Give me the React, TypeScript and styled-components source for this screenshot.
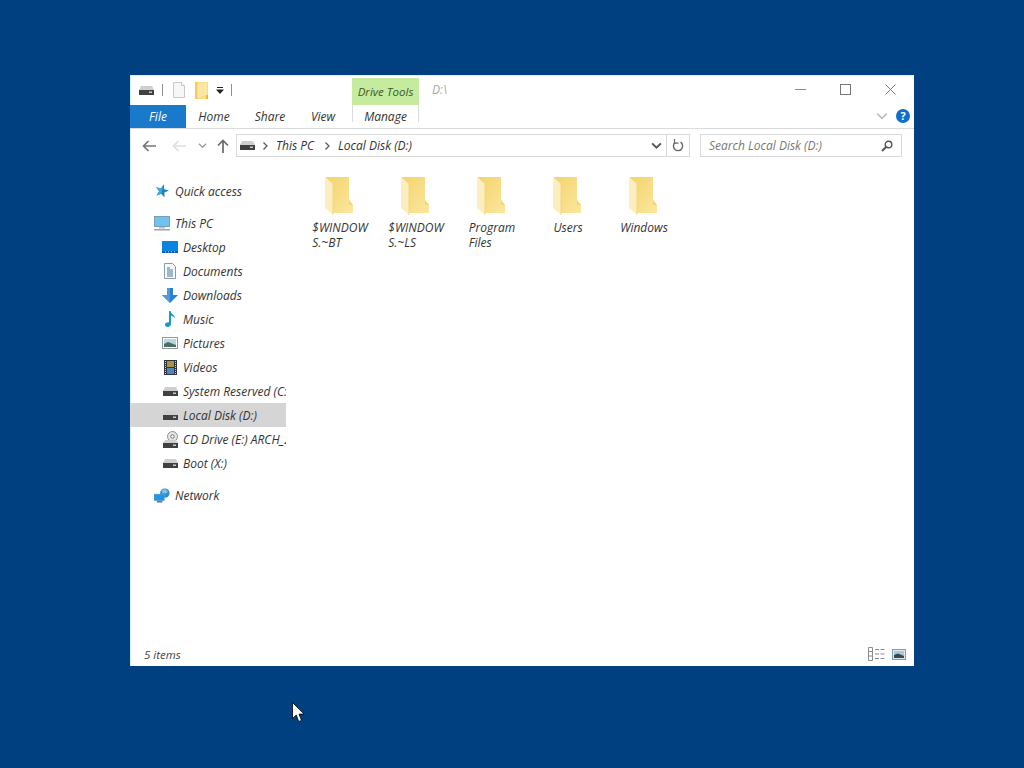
import React from 'react'
import styled, { createGlobalStyle } from 'styled-components'

const GlobalStyle = createGlobalStyle`
  html, body { margin: 0; padding: 0; }
  body {
    font-family: "Open Sans", "Noto Sans", sans-serif;
    font-style: italic;
    font-size: 12px;
    color: #1f1f1f;
  }
`

const DriveIcon = () => (
  <svg width="15" height="9" viewBox="0 0 15 9">
    <path d="M2 0h11l2 4H0z" fill="#cfcfcf" />
    <rect x="0" y="4" width="15" height="5" fill="#3f4245" />
    <rect x="10" y="5.500" width="3" height="1.500" fill="#c8c8c8" />
  </svg>
)

const FileIcon = () => (
  <svg width="12" height="16" viewBox="0 0 12 16">
    <path d="M.5.5h8l3 3v12H.5z" fill="#f7f7f7" stroke="#c9c9c9" />
    <path d="M8.500.5v3h3" fill="#fff" stroke="#c9c9c9" />
  </svg>
)

const SmallFolder = () => (
  <svg width="13" height="17" viewBox="0 0 13 17">
    <rect width="13" height="17" fill="#fbdc82" />
    <path d="M0 0h2.500v17H0z" fill="#f6c95a" />
    <path d="M2.500 1H12v12l-9.500 3z" fill="#fde6a0" />
    <path d="M11 13h2v4h-2z" fill="#efb53a" />
  </svg>
)

const Folder = () => (
  <svg width="28" height="38" viewBox="0 0 28 38">
    <defs>
      <linearGradient id="folderBody" x1="0" y1="0" x2="1" y2="1">
        <stop offset="0" stopColor="#f4d36c" />
        <stop offset="1" stopColor="#fbe79f" />
      </linearGradient>
    </defs>
    <path d="M1 0h23v23l4 5v8H8z" fill="url(#folderBody)" />
    <path d="M0 0l8 7v31l-8-7z" fill="#fdeec0" />
    <path d="M8 7v31" stroke="#f0d06e" strokeWidth=".8" />
    <path d="M24 23l4 5h-4z" fill="#f4d576" />
  </svg>
)

const StarIcon = () => (
  <svg width="14" height="14" viewBox="0 0 14 14">
    <path d="M8.800.2l.4 5 4.800 1.400-4.650 1.900.16 5-3.230-3.800-4.720 1.700 2.640-4.260L1.130 3.200 6 4.400z" fill="#1b7fc0" />
    <path d="M8.800.2L6.300 9.700l-4.740 1.700 2.640-4.260L1.130 3.200 6 4.400z" fill="#3fa6de" />
  </svg>
)

const MonitorIcon = () => (
  <svg width="16" height="15" viewBox="0 0 16 15">
    <rect x=".5" y=".5" width="15" height="10" fill="#6ec4ee" stroke="#6f8fa3" strokeWidth=".8" />
    <rect x="5" y="11" width="6" height="1.500" fill="#b4c4cf" />
    <rect x="0" y="13" width="16" height="1.500" fill="#9aa7af" />
  </svg>
)

const DesktopIcon = () => (
  <svg width="16" height="12" viewBox="0 0 16 12">
    <rect width="16" height="12" fill="#0a84e0" />
    <rect y="10" width="16" height="2" fill="#0b5fa8" />
    <path d="M3 10.800h1M6 10.800h1M9 10.800h1M12 10.800h1" stroke="#bfe2fa" strokeWidth="1" />
  </svg>
)

const DocumentIcon = () => (
  <svg width="12" height="16" viewBox="0 0 12 16">
    <path d="M.5.5h8l3 3v12H.5z" fill="#f8f8f8" stroke="#8b98a8" />
    <path d="M3 5h3M3 7h6M3 9h6M3 11h6M3 13h6" stroke="#3f79ad" strokeWidth="1" />
  </svg>
)

const DownloadIcon = () => (
  <svg width="16" height="15" viewBox="0 0 16 15">
    <path d="M5 0h6v7h5l-8 8-8-8h5z" fill="#2f80cc" />
    <path d="M5 0h3v15l-8-8h5z" fill="#4c9ce2" />
  </svg>
)

const MusicIcon = () => (
  <svg width="12" height="16" viewBox="0 0 12 16">
    <path d="M5 0h1.500c.5 3 4.500 3.500 4.500 7.500-1-2-3-2.500-4-2.700V13c0 1.800-1.700 3-3.500 3S1 15 1 13.500 2.800 11 5 11.300z" fill="#1c9ac4" />
  </svg>
)

const PictureIcon = () => (
  <svg width="16" height="12" viewBox="0 0 16 12">
    <rect x=".5" y=".5" width="15" height="11" fill="#fff" stroke="#8a97a3" />
    <rect x="2" y="2" width="12" height="8" fill="#b6d6e2" />
    <path d="M2 7l4-2 8 3v2H2z" fill="#4d6b60" />
  </svg>
)

const VideoIcon = () => (
  <svg width="13" height="15" viewBox="0 0 13 15">
    <rect width="13" height="15" fill="#2d3340" />
    <rect x="3" y="1" width="7" height="6" fill="#a8963f" />
    <rect x="3" y="8" width="7" height="6" fill="#4d86b8" />
    <path d="M1.500 1v13M11.500 1v13" stroke="#d6d9de" strokeWidth="1" strokeDasharray="1 1" />
  </svg>
)

const CdDriveIcon = () => (
  <svg width="15" height="17" viewBox="0 0 15 17">
    <circle cx="9.500" cy="5.500" r="5" fill="#e6e6e6" stroke="#8f8f8f" />
    <circle cx="9.500" cy="5.500" r="1.800" fill="#f5f5f5" stroke="#777" />
    <path d="M2 9h11l2 3H0z" fill="#cfcfcf" />
    <rect y="12" width="15" height="5" fill="#3f4245" />
    <rect x="10" y="13.500" width="3" height="1.500" fill="#c8c8c8" />
  </svg>
)

const NetworkIcon = () => (
  <svg width="17" height="15" viewBox="0 0 17 15">
    <circle cx="11.500" cy="5" r="5" fill="#2f8fc8" />
    <path d="M8 2l4-1.500 3 3-2.500 2L9 5z" fill="#7cc5e8" />
    <rect x="0" y="6" width="11" height="7" fill="#1f97e6" stroke="#6fa8cc" strokeWidth=".6" />
    <rect x="3" y="13" width="6" height="2" fill="#5b7f99" />
  </svg>
)

const BackArrow = ({ color }: { color: string }) => (
  <svg width="14" height="12" viewBox="0 0 14 12">
    <path d="M6.500 1L1.500 6l5 5M2 6h12" fill="none" stroke={color} strokeWidth="1.700" />
  </svg>
)

const UpArrow = () => (
  <svg width="12" height="14" viewBox="0 0 12 14">
    <path d="M1 6.500l5-5 5 5M6 2v12" fill="none" stroke="#6a6a6a" strokeWidth="1.700" />
  </svg>
)

const Chevron = ({ size, color, weight }: { size: number; color: string; weight: number }) => (
  <svg width={size} height={size} viewBox="0 0 10 10">
    <path d="M1 3l4 4 4-4" fill="none" stroke={color} strokeWidth={weight} />
  </svg>
)

const Crumb = () => (
  <svg width="6" height="8" viewBox="0 0 6 8">
    <path d="M1.500.5L5 4 1.500 7.500" fill="none" stroke="#555" strokeWidth="1.200" />
  </svg>
)

const Refresh = () => (
  <svg width="12" height="13" viewBox="0 0 12 13">
    <path d="M3.200 3.400a4.600 4.600 0 1 0 5.400-.2" fill="none" stroke="#666" strokeWidth="1.400" />
    <path d="M2.500 0v4.200h4" fill="none" stroke="#666" strokeWidth="1.200" />
  </svg>
)

const SearchGlass = () => (
  <svg width="12" height="12" viewBox="0 0 12 12">
    <circle cx="7.500" cy="4.500" r="3.300" fill="none" stroke="#555" strokeWidth="1.400" />
    <path d="M5 7l-4 4" stroke="#555" strokeWidth="2" />
  </svg>
)

const DetailsView = () => (
  <svg width="17" height="14" viewBox="0 0 17 14">
    <path d="M.5.500h4v13h-4zM.5 4.500h4M.5 9h4" fill="#fff" stroke="#8c8c8c" />
    <path d="M7 2.500h10M7 7h10M7 11.500h10" stroke="#8c8c8c" strokeDasharray="4 1.500" />
  </svg>
)

const LargeView = () => (
  <svg width="14" height="11" viewBox="0 0 14 11">
    <rect x=".5" y=".5" width="13" height="10" fill="#dfe9ee" stroke="#7f9bb0" />
    <rect x="2" y="2" width="10" height="7" fill="#a8c8d6" />
    <path d="M2 6l4-1.500L12 7v2H2z" fill="#3b4a48" />
  </svg>
)

const Cursor = () => (
  <svg width="12" height="21" viewBox="0 0 12 21">
    <path d="M.500.500v16l3.800-3.500 2.400 6.500 2.800-1.100-2.500-6.300h5z" fill="#fff" stroke="#000" strokeWidth=".8" />
  </svg>
)

const navItems = [
  { label: 'Quick access', icon: <StarIcon />, level: 0, gap: 8 },
  { label: 'This PC', icon: <MonitorIcon />, level: 0 },
  { label: 'Desktop', icon: <DesktopIcon />, level: 1 },
  { label: 'Documents', icon: <DocumentIcon />, level: 1 },
  { label: 'Downloads', icon: <DownloadIcon />, level: 1 },
  { label: 'Music', icon: <MusicIcon />, level: 1 },
  { label: 'Pictures', icon: <PictureIcon />, level: 1 },
  { label: 'Videos', icon: <VideoIcon />, level: 1 },
  { label: 'System Reserved (C:)', icon: <DriveIcon />, level: 1 },
  { label: 'Local Disk (D:)', icon: <DriveIcon />, level: 1, selected: true },
  { label: 'CD Drive (E:) ARCH_202', icon: <CdDriveIcon />, level: 1 },
  { label: 'Boot (X:)', icon: <DriveIcon />, level: 1, gap: 8 },
  { label: 'Network', icon: <NetworkIcon />, level: 0 },
]

const folders = [
  ['$WINDOW', 'S.~BT'],
  ['$WINDOW', 'S.~LS'],
  ['Program', 'Files'],
  ['Users'],
  ['Windows'],
]

export default function App() {
  return (
    <Desktop>
      <GlobalStyle />
      <Window>
        <TitleBar>
          <QuickAccess>
            <DriveIcon />
            <QatSeparator />
            <FileIcon />
            <SmallFolder />
            <QatMenu>
              <svg width="8" height="7" viewBox="0 0 8 7">
                <path d="M1 .5h6" stroke="#222" />
                <path d="M0 2.500h8L4 7z" fill="#222" />
              </svg>
            </QatMenu>
            <QatSeparator />
          </QuickAccess>
          <ContextTab>Drive Tools</ContextTab>
          <WindowTitle>D:\</WindowTitle>
          <WindowControls>
            <svg width="11" height="11" viewBox="0 0 11 11">
              <path d="M0 5.500h11" stroke="#8a8a8a" />
            </svg>
            <svg width="11" height="11" viewBox="0 0 11 11">
              <rect x=".5" y=".5" width="10" height="10" fill="none" stroke="#777" />
            </svg>
            <svg width="11" height="11" viewBox="0 0 11 11">
              <path d="M.5.500l10 10M10.500.500l-10 10" stroke="#777" />
            </svg>
          </WindowControls>
        </TitleBar>
        <RibbonTabs>
          <FileTab>File</FileTab>
          <RibbonTab $width={56}>Home</RibbonTab>
          <RibbonTab $width={56}>Share</RibbonTab>
          <RibbonTab $width={50}>View</RibbonTab>
          <ManageTab>Manage</ManageTab>
          <RibbonEnd>
            <Chevron size={12} color="#b5b5b5" weight={1.2} />
            <HelpBadge>?</HelpBadge>
          </RibbonEnd>
        </RibbonTabs>
        <AddressRow>
          <NavButtons>
            <BackArrow color="#777" />
            <BackArrow color="#dedede" />
            <Chevron size={9} color="#999" weight={1.4} />
            <UpArrow />
          </NavButtons>
          <AddressBox>
            <DriveIcon />
            <Crumb />
            <CrumbText>This PC</CrumbText>
            <Crumb />
            <CrumbText>Local Disk (D:)</CrumbText>
            <AddressTools>
              <Chevron size={11} color="#555" weight={1.7} />
              <RefreshButton>
                <Refresh />
              </RefreshButton>
            </AddressTools>
          </AddressBox>
          <SearchBox>
            <span>Search Local Disk (D:)</span>
            <SearchGlass />
          </SearchBox>
        </AddressRow>
        <Body>
          <Sidebar>
            {navItems.map((item) => (
              <NavRow key={item.label} $level={item.level} $selected={item.selected} $gap={item.gap}>
                <NavIcon>{item.icon}</NavIcon>
                <NavLabel>{item.label}</NavLabel>
              </NavRow>
            ))}
          </Sidebar>
          <Content>
            {folders.map((lines, i) => (
              <FolderItem key={i}>
                <FolderGlyph>
                  <Folder />
                </FolderGlyph>
                <FolderLabel>
                  {lines.map((line) => (
                    <div key={line}>{line}</div>
                  ))}
                </FolderLabel>
              </FolderItem>
            ))}
          </Content>
        </Body>
        <StatusBar>
          <span>5 items</span>
          <ViewButtons>
            <DetailsView />
            <LargeView />
          </ViewButtons>
        </StatusBar>
      </Window>
      <Pointer>
        <Cursor />
      </Pointer>
    </Desktop>
  )
}

const Desktop = styled.div`
  position: relative;
  box-sizing: border-box;
  width: 1024px;
  height: 768px;
  padding: 75px 0 0 130px;
  background: #004080;
  overflow: hidden;
`

const Pointer = styled.div`
  position: absolute;
  left: 292px;
  top: 702px;
  line-height: 0;
`

const Window = styled.div`
  display: flex;
  flex-direction: column;
  width: 784px;
  height: 591px;
  background: #fff;
  box-shadow: inset 1px 1px 0 #d8f2fc;
`

const TitleBar = styled.div`
  display: flex;
  height: 30px;
  flex: none;
`

const QuickAccess = styled.div`
  display: flex;
  align-items: center;
  width: 222px;
  padding-left: 9px;
  box-sizing: border-box;
  gap: 8px;
  & > svg:nth-child(3) { margin-left: 2px; }
  & > svg:nth-child(4) { margin-left: 2px; }
  & > div:last-child { margin-left: -1px; }
`

const QatSeparator = styled.div`
  width: 1px;
  height: 12px;
  background: #8f8f8f;
`

const QatMenu = styled.div`
  display: flex;
  align-items: center;
  line-height: 0;
`

const ContextTab = styled.div`
  align-self: flex-end;
  width: 67px;
  height: 27px;
  line-height: 28px;
  text-align: center;
  background: #c4eb9e;
  color: #3d5a25;
  font-size: 11.5px;
`

const WindowTitle = styled.div`
  margin-left: 13px;
  line-height: 29px;
  color: #a8a8a8;
`

const WindowControls = styled.div`
  display: flex;
  align-items: center;
  gap: 34px;
  margin-left: auto;
  margin-right: 18px;
  padding-bottom: 2px;
`

const RibbonTabs = styled.div`
  display: flex;
  height: 24px;
  flex: none;
  box-sizing: border-box;
  border-bottom: 1px solid #dadbdc;
`

const FileTab = styled.div`
  width: 56px;
  height: 23px;
  line-height: 24px;
  text-align: center;
  background: #1979ca;
  color: #fff;
`

const RibbonTab = styled.div<{ $width: number }>`
  width: ${(p) => p.$width}px;
  line-height: 24px;
  text-align: center;
  color: #333;
`

const ManageTab = styled.div`
  box-sizing: border-box;
  width: 67px;
  height: 17px;
  margin-left: 4px;
  line-height: 24px;
  text-align: center;
  color: #333;
  border-left: 1px solid #dadbdc;
  border-right: 1px solid #dadbdc;
`

const RibbonEnd = styled.div`
  display: flex;
  align-items: center;
  gap: 8px;
  margin-left: auto;
  margin-right: 4px;
  padding-bottom: 2px;
`

const HelpBadge = styled.div`
  width: 14px;
  height: 14px;
  border-radius: 50%;
  background: #0f6fc6;
  color: #fff;
  font-size: 11px;
  font-weight: 700;
  font-style: normal;
  line-height: 14px;
  text-align: center;
`

const AddressRow = styled.div`
  display: flex;
  align-items: center;
  flex: none;
  height: 34px;
  padding-bottom: 1px;
  box-sizing: border-box;
`

const NavButtons = styled.div`
  display: flex;
  align-items: center;
  width: 106px;
  padding-left: 12px;
  box-sizing: border-box;
  & > svg:nth-child(2) { margin-left: 16px; }
  & > svg:nth-child(3) { margin-left: 12px; }
  & > svg:nth-child(4) { margin-left: 10px; }
`

const AddressBox = styled.div`
  display: flex;
  align-items: center;
  box-sizing: border-box;
  width: 454px;
  height: 23px;
  padding-left: 3px;
  border: 1px solid #d9d9d9;
  & > svg:nth-child(2) { margin-left: 7px; }
  & > svg:nth-child(4) { margin-left: 10px; }
`

const CrumbText = styled.span`
  margin-left: 8px;
  color: #333;
`

const AddressTools = styled.div`
  display: flex;
  align-items: center;
  gap: 4px;
  margin-left: auto;
  height: 100%;
`

const RefreshButton = styled.div`
  display: flex;
  align-items: center;
  justify-content: center;
  width: 22px;
  height: 100%;
  border-left: 1px solid #d9d9d9;
`

const SearchBox = styled.div`
  display: flex;
  align-items: center;
  justify-content: space-between;
  box-sizing: border-box;
  width: 202px;
  height: 23px;
  margin-left: 10px;
  padding: 0 8px;
  border: 1px solid #d9d9d9;
  color: #777;
`

const Body = styled.div`
  display: flex;
  flex: 1;
  min-height: 0;
`

const Sidebar = styled.div`
  width: 156px;
  flex: none;
  padding-top: 16px;
  overflow: hidden;
`

const NavRow = styled.div<{ $level: number; $selected?: boolean; $gap?: number }>`
  display: flex;
  align-items: center;
  height: 24px;
  margin-bottom: ${(p) => p.$gap ?? 0}px;
  padding-left: ${(p) => (p.$level === 1 ? 32 : 24)}px;
  background: ${(p) => (p.$selected ? '#d5d5d5' : 'transparent')};
`

const NavIcon = styled.div`
  display: flex;
  align-items: center;
  justify-content: center;
  width: 16px;
  flex: none;
  line-height: 0;
`

const NavLabel = styled.span`
  margin-left: 5px;
  white-space: nowrap;
  color: #333;
`

const Content = styled.div`
  display: flex;
  align-items: flex-start;
  padding: 14px 0 0 16px;
`

const FolderItem = styled.div`
  display: flex;
  flex-direction: column;
  align-items: center;
  width: 76px;
`

const FolderGlyph = styled.div`
  height: 38px;
  margin-right: 2px;
`

const FolderLabel = styled.div`
  margin-top: 5px;
  line-height: 15px;
  color: #333;
`

const StatusBar = styled.div`
  display: flex;
  align-items: center;
  justify-content: space-between;
  flex: none;
  height: 24px;
  padding: 0 8px 0 14px;
  color: #444;
  font-size: 11.5px;
`

const ViewButtons = styled.div`
  display: flex;
  align-items: center;
  gap: 7px;
  line-height: 0;
`
